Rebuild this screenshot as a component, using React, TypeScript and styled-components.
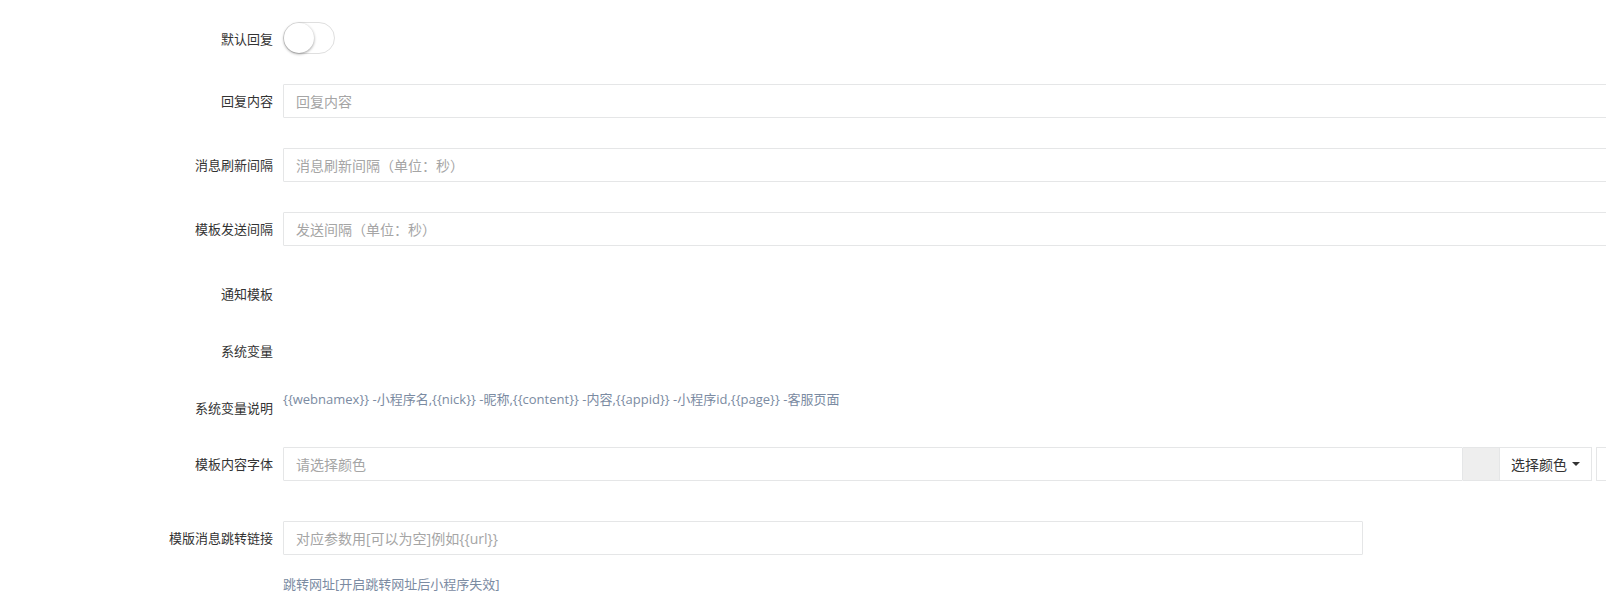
import styled, {createGlobalStyle} from "styled-components";

const GlobalStyle = createGlobalStyle`
    html, body {
        margin: 0;
        padding: 0;
        background: #fff;
        overflow: hidden;
    }
    body {
        font-family: "Open Sans", "Noto Sans CJK SC", sans-serif;
        color: #333;
    }
`;

export default function App() {
    return (
        <>
            <GlobalStyle/>
            <Form>
                <Row $mt={22}>
                    <Label>默认回复</Label>
                    <Switch><Knob/></Switch>
                </Row>

                <Row $mt={28}>
                    <Label>回复内容</Label>
                    <Input placeholder="回复内容"/>
                </Row>

                <Row $mt={30}>
                    <Label>消息刷新间隔</Label>
                    <Input placeholder="消息刷新间隔（单位：秒）"/>
                </Row>

                <Row $mt={30}>
                    <Label>模板发送间隔</Label>
                    <Input placeholder="发送间隔（单位：秒）"/>
                </Row>

                <Row $mt={31}>
                    <Label>通知模板</Label>
                </Row>

                <Row $mt={23}>
                    <Label>系统变量</Label>
                </Row>

                <Row $mt={23}>
                    <Label>系统变量说明</Label>
                    <Hint $up={2}>
                        {"{{webnamex}} -小程序名,{{nick}} -昵称,{{content}} -内容,{{appid}} -小程序id,{{page}} -客服页面"}
                    </Hint>
                </Row>

                <Row $mt={22}>
                    <Label>模板内容字体</Label>
                    <ColorGroup>
                        <Input placeholder="请选择颜色"/>
                        <Swatch/>
                        <PickButton>
                            选择颜色 <Caret/>
                        </PickButton>
                        <ExtraButton/>
                    </ColorGroup>
                </Row>

                <Row $mt={40}>
                    <Label>模版消息跳转链接</Label>
                    <Input $width={1080} placeholder="对应参数用[可以为空]例如{{url}}"/>
                </Row>

                <Row $mt={19}>
                    <Label/>
                    <Hint>跳转网址[开启跳转网址后小程序失效]</Hint>
                </Row>
            </Form>
        </>
    );
}

const Form = styled.div`
    display: flex;
    flex-direction: column;
    width: 1720px;
`;

const Row = styled.div<{ $mt: number }>`
    display: flex;
    align-items: flex-start;
    gap: 10px;
    margin-top: ${p => p.$mt}px;
`;

const Label = styled.label`
    flex: 0 0 273px;
    text-align: right;
    font-size: 13px;
    line-height: 34px;
    min-height: 34px;
    color: #333;
    white-space: nowrap;
`;

const Input = styled.input<{ $width?: number }>`
    box-sizing: border-box;
    ${p => p.$width ? `width: ${p.$width}px;` : "flex: 1;"}
    min-width: 0;
    height: 34px;
    padding: 0 12px;
    border: 1px solid #e5e6e7;
    border-radius: 1px;
    background: #fff;
    font-family: inherit;
    font-size: 14px;
    color: #333;
    outline: none;

    &::placeholder {
        color: #a5a5a5;
    }
`;

const Switch = styled.span`
    box-sizing: border-box;
    display: inline-flex;
    align-items: center;
    width: 52px;
    height: 32px;
    border: 1px solid #dfdfdf;
    border-radius: 20px;
    background: #fff;
`;

const Knob = styled.span`
    width: 30px;
    height: 30px;
    border-radius: 50%;
    background: #fff;
    box-shadow: 0 1px 3px rgba(0, 0, 0, 0.4);
`;

const Hint = styled.div<{ $up?: number }>`
    font-size: 13px;
    line-height: 20px;
    color: #7b8ba2;
    white-space: nowrap;
    margin-top: ${p => -(p.$up ?? 0)}px;
`;

const ColorGroup = styled.div`
    display: flex;
    flex: 0 0 1433px;
    align-items: stretch;
`;

const Swatch = styled.span`
    flex: 0 0 36px;
    height: 32px;
    border-top: 1px solid #e5e6e7;
    border-bottom: 1px solid #e5e6e7;
    background: #eee;
`;

const PickButton = styled.span`
    box-sizing: border-box;
    flex: 0 0 93px;
    display: flex;
    align-items: center;
    justify-content: center;
    gap: 5px;
    height: 34px;
    border: 1px solid #e5e6e7;
    background: #fff;
    font-size: 14px;
    color: #333;
`;

const Caret = styled.span`
    width: 0;
    height: 0;
    border-left: 4px solid transparent;
    border-right: 4px solid transparent;
    border-top: 4px solid #333;
`;

const ExtraButton = styled.span`
    box-sizing: border-box;
    flex: 0 0 120px;
    height: 34px;
    margin-left: 4px;
    border: 1px solid #e5e6e7;
    background: #fff;
`;
